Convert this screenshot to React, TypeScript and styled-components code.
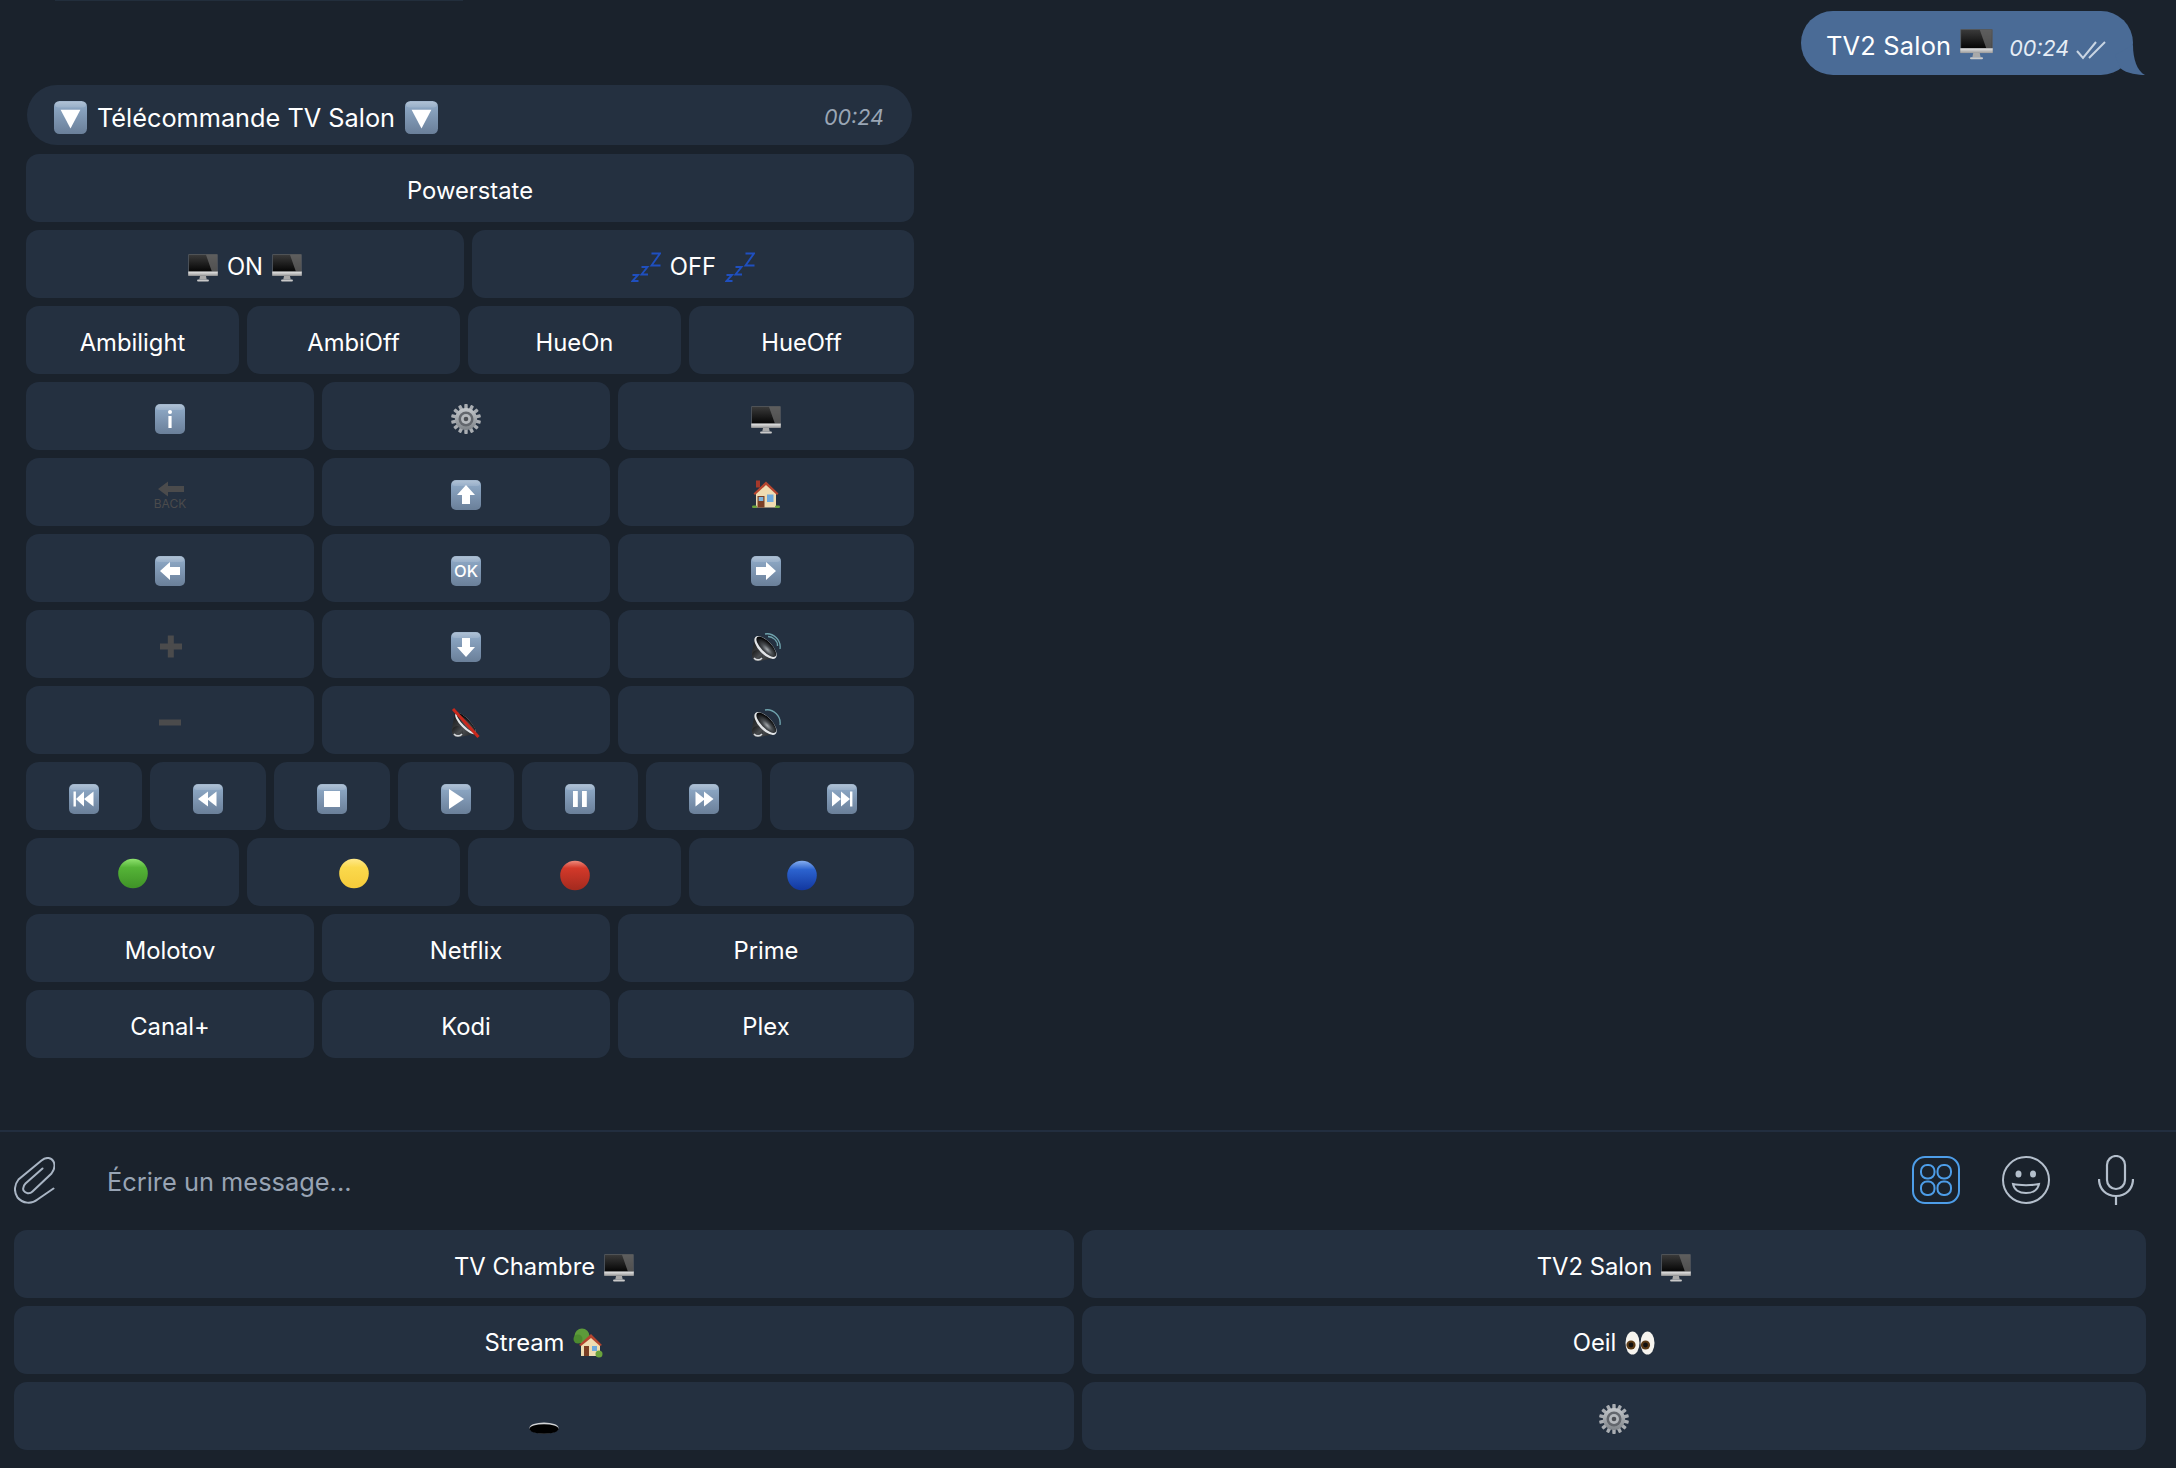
import React from 'react';
import styled, {createGlobalStyle} from 'styled-components';

const GlobalStyle = createGlobalStyle`
  html, body {
    margin: 0;
    padding: 0;
    background: #1a222c;
  }
  body {
    font-family: Inter, "Noto Sans", "Liberation Sans", sans-serif;
    -webkit-font-smoothing: antialiased;
  }
`;

const Page = styled.div`
  width: 2176px;
  height: 1468px;
  background: #1a222c;
  display: flex;
  flex-direction: column;
  overflow: hidden;
`;

const HiddenDefs = styled.svg`
  position: absolute;
  width: 0;
  height: 0;
`;

const TopSliver = styled.div`
  width: 408px;
  height: 1px;
  margin-left: 55px;
  background: #222e3c;
`;

const Messages = styled.main`
  flex: 1;
  display: flex;
  flex-direction: column;
  padding: 10px 43px 0 26px;
`;

const OutRow = styled.div`
  display: flex;
  justify-content: flex-end;
  margin-bottom: 10px;
`;

const OutBubble = styled.div`
  position: relative;
  height: 64px;
  box-sizing: border-box;
  width: 332px;
  padding: 0 16px 0 25px;
  border-radius: 32px;
  background: #4a6b96;
  color: #fff;
  display: flex;
  align-items: center;
  gap: 9px;
  font-size: 25.4px;
  letter-spacing: 0.2px;
  white-space: nowrap;
`;

const OutText = styled.span`
  margin-top: 5px;
`;

const BubbleTail = styled.svg`
  position: absolute;
  right: -12px;
  bottom: 0;
`;

const OutTime = styled.span`
  font-size: 21.5px;
  font-style: italic;
  letter-spacing: 0;
  color: #e6edf5;
  margin: 9px -2px 0 7px;
`;

const TickMarks = styled.svg`
  margin-top: 14px;
`;

const Remote = styled.section`
  width: 888px;
  display: flex;
  flex-direction: column;
  gap: 8px;
`;

const TitleBubble = styled.div`
  height: 60px;
  margin: 0 2px 1px 1px;
  box-sizing: border-box;
  padding: 4px 28px 0 27px;
  border-radius: 30px;
  background: #243040;
  color: #fff;
  display: flex;
  align-items: center;
  gap: 10px;
  font-size: 25.3px;
`;

const InTime = styled.span`
  margin-left: auto;
  font-size: 21.5px;
  font-style: italic;
  color: #9aa6b5;
`;

const KeyRow = styled.div<{$cols: string}>`
  display: grid;
  grid-template-columns: ${p => p.$cols};
  gap: 8px;
`;

const Tile = styled.button`
  height: 68px;
  box-sizing: border-box;
  border: 0;
  padding: 5px 0 0;
  border-radius: 13px;
  background: #243040;
  color: #fff;
  font-family: inherit;
  font-size: 23.8px;
  display: flex;
  align-items: center;
  justify-content: center;
  gap: 9px;
`;

const Composer = styled.div`
  height: 100px;
  box-sizing: border-box;
  border-top: 2px solid #222e3f;
  padding: 0 42px 2px 14px;
  display: flex;
  align-items: center;
`;

const Placeholder = styled.span`
  margin: 3px 0 0 52px;
  flex: 1;
  font-size: 25.4px;
  color: #98a4b4;
`;

const ComposerIcons = styled.div`
  display: flex;
  align-items: center;
  gap: 42px;
`;

const MicSlot = styled.div`
  display: flex;
  margin-left: 6px;
`;

const Keyboard = styled.div`
  display: grid;
  grid-template-columns: 1060px 1064px;
  gap: 8px;
  padding: 0 30px 18px 14px;
`;

const MonitorSvg = styled.svg`
  flex-shrink: 0;
  margin-top: 3px;
`;

const Grads = () => (
  <HiddenDefs aria-hidden="true">
    <defs>
      <linearGradient id="cap" x1="0" y1="0" x2="0" y2="1">
        <stop offset="0" stopColor="#a6bad0"/>
        <stop offset="0.18" stopColor="#8ba5c2"/>
        <stop offset="1" stopColor="#6a7f99"/>
      </linearGradient>
      <linearGradient id="screen" x1="0" y1="0" x2="0" y2="1">
        <stop offset="0" stopColor="#3a3a3a"/>
        <stop offset="1" stopColor="#050505"/>
      </linearGradient>
      <linearGradient id="chin" x1="0" y1="0" x2="0" y2="1">
        <stop offset="0" stopColor="#e8e8e8"/>
        <stop offset="1" stopColor="#9a9a9a"/>
      </linearGradient>
      <linearGradient id="green" x1="0" y1="0" x2="0" y2="1">
        <stop offset="0" stopColor="#8fe36f"/>
        <stop offset="0.3" stopColor="#55b437"/>
        <stop offset="1" stopColor="#3f9227"/>
      </linearGradient>
      <linearGradient id="yellow" x1="0" y1="0" x2="0" y2="1">
        <stop offset="0" stopColor="#ffe98a"/>
        <stop offset="0.3" stopColor="#fbd94c"/>
        <stop offset="1" stopColor="#f6cb3a"/>
      </linearGradient>
      <linearGradient id="red" x1="0" y1="0" x2="0" y2="1">
        <stop offset="0" stopColor="#ee8a7c"/>
        <stop offset="0.25" stopColor="#d3392a"/>
        <stop offset="1" stopColor="#a32a1e"/>
      </linearGradient>
      <linearGradient id="blue" x1="0" y1="0" x2="0" y2="1">
        <stop offset="0" stopColor="#86aff0"/>
        <stop offset="0.3" stopColor="#2c63cf"/>
        <stop offset="1" stopColor="#12379f"/>
      </linearGradient>
      <linearGradient id="steel" x1="0" y1="0" x2="0" y2="1">
        <stop offset="0" stopColor="#c4c8cc"/>
        <stop offset="1" stopColor="#7f8489"/>
      </linearGradient>
      <radialGradient id="cone" cx="0.6" cy="0.62" r="0.6">
        <stop offset="0" stopColor="#a4a9ad"/>
        <stop offset="0.4" stopColor="#4a4e52"/>
        <stop offset="1" stopColor="#050506"/>
      </radialGradient>
      <linearGradient id="magnet" x1="0" y1="0" x2="1" y2="1">
        <stop offset="0" stopColor="#121314"/>
        <stop offset="0.6" stopColor="#4a4d50"/>
        <stop offset="1" stopColor="#1e2022"/>
      </linearGradient>
    </defs>
  </HiddenDefs>
);

const KeyCap = ({size = 30, children}: {size?: number; children: React.ReactNode}) => (
  <svg width={size} height={size} viewBox="0 0 30 30">
    <rect width="30" height="30" rx="5" fill="url(#cap)"/>
    <rect x="1" y="1" width="28" height="5" rx="3" fill="#fff" opacity="0.14"/>
    <g fill="#fff">{children}</g>
  </svg>
);

const Monitor = ({size = 30}: {size?: number}) => (
  <MonitorSvg width={size} height={size * 0.92} viewBox="0 0 30 28">
    <rect x="0" y="0" width="30" height="22" rx="1" fill="#55595e"/>
    <rect x="0.8" y="0.8" width="28.4" height="17" fill="url(#screen)"/>
    <path d="M18 0.8H29.2V17.8H24Z" fill="#6a6a6a" opacity="0.75"/>
    <rect x="0" y="17.8" width="30" height="4.4" fill="url(#chin)"/>
    <path d="M12 22.2H18L18.8 26H11.2Z" fill="#a9a9a9"/>
    <rect x="9" y="26" width="12" height="2" rx="1" fill="#c9c9c9"/>
  </MonitorSvg>
);

const Gear = ({size = 30}: {size?: number}) => (
  <svg width={size} height={size} viewBox="0 0 30 30">
    {Array.from({length: 14}).map((_, i) => (
      <rect key={i} x="13.3" y="0" width="3.4" height="7" rx="0.8" fill="#a9adb2"
            transform={`rotate(${i * (360 / 14)} 15 15)`}/>
    ))}
    <circle cx="15" cy="15" r="11" fill="url(#steel)"/>
    <circle cx="15" cy="15" r="7.5" fill="#63676d"/>
    <circle cx="15" cy="15" r="5" fill="#b4b8bc"/>
    <circle cx="15" cy="15" r="2.3" fill="#4c4f54"/>
  </svg>
);

const House = () => (
  <svg width="30" height="30" viewBox="0 0 30 30">
    <rect x="5" y="0.5" width="4" height="7" fill="#a5382a"/>
    <path d="M5 12L15 3L25 12V27.5H5Z" fill="#f0dcb2"/>
    <path d="M2.5 13.5L15 1.5L27.5 13.5L26 15L15 5L4 15Z" fill="#b5452f"/>
    <rect x="6.5" y="16" width="7" height="11.5" fill="#7b3f25"/>
    <rect x="7.7" y="17" width="4.6" height="4" fill="#7db4dc"/>
    <rect x="16" y="14.5" width="6.5" height="7.5" fill="#6ea9dd"/>
    <rect x="1" y="25.5" width="5" height="2.6" rx="1.3" fill="#6aa33c"/>
    <rect x="24" y="25.5" width="5" height="2.6" rx="1.3" fill="#6aa33c"/>
  </svg>
);

const TreeHouse = () => (
  <svg width="30" height="30" viewBox="0 0 30 30">
    <circle cx="9" cy="8" r="7.5" fill="#5d9b3a"/>
    <circle cx="5" cy="11" r="4.5" fill="#4c8a2f"/>
    <path d="M8 16L18 8L27 16V28H8Z" fill="#f0dcb2"/>
    <path d="M6 17L18 6L29 17L27 18L18 10L8 18Z" fill="#b5452f"/>
    <rect x="11" y="18" width="5" height="10" fill="#7b3f25"/>
    <rect x="19" y="18" width="5" height="5" fill="#6ea9dd"/>
    <circle cx="26" cy="26" r="3.5" fill="#6aa33c"/>
  </svg>
);

const Speaker = ({waves = 2, muted = false}: {waves?: number; muted?: boolean}) => (
  <svg width="30" height="30" viewBox="0 0 30 30">
    {waves > 0 && <path d="M14 2C22 0.5 30.5 8 29 17" fill="none" stroke="#6fa3ad" strokeWidth="1.3"/>}
    {waves > 1 && <path d="M17 4.5C22 4.5 27 9 26.5 14" fill="none" stroke="#6fa3ad" strokeWidth="1.3"/>}
    <path d="M4 5L24 26L9 29C3 29 0 25 1 20Z" fill="url(#magnet)"/>
    <circle cx="6.5" cy="23.5" r="5.5" fill="url(#magnet)"/>
    <path d="M3 26C5 28.5 9 28.5 11 26" fill="none" stroke="#d4d8dc" strokeWidth="1.6"/>
    <g transform="rotate(46 14.5 15.5)">
      <ellipse cx="14.5" cy="15.5" rx={muted ? 14 : 14.5} ry={muted ? 4.8 : 6.6} fill="#e2e5e8"/>
      <ellipse cx="14.5" cy="14.4" rx={muted ? 13 : 13.2} ry={muted ? 3.6 : 5.2} fill="url(#cone)"/>
    </g>
    {muted && <path d="M2 1L27.5 29" stroke="#c9281c" strokeWidth="3"/>}
  </svg>
);

const Zzz = () => (
  <svg width="30" height="30" viewBox="0 0 30 30" fill="none" stroke="#1f4fbf" strokeWidth="1.9">
    <path d="M20.5 1.5H29L20.5 13.5H29.5"/>
    <path d="M10.5 15H16.5L10.5 22.5H17"/>
    <path d="M1.5 23H7L1.5 29H7.5"/>
  </svg>
);

const Ball = ({color, cy = 15}: {color: string; cy?: number}) => (
  <svg width="30" height="30" viewBox="0 0 30 30" overflow="visible">
    <circle cx="15" cy={cy} r="14.8" fill={`url(#${color})`}/>
  </svg>
);

const Eyes = () => (
  <svg width="30" height="30" viewBox="0 0 30 30">
    <ellipse cx="7.5" cy="15" rx="7" ry="11.5" fill="#f6f4ef"/>
    <ellipse cx="22.5" cy="15" rx="7" ry="11.5" fill="#f6f4ef"/>
    <circle cx="6" cy="17" r="4.6" fill="#5a3a16"/>
    <circle cx="6" cy="17" r="2.4" fill="#111"/>
    <circle cx="20.5" cy="17" r="4.6" fill="#5a3a16"/>
    <circle cx="20.5" cy="17" r="2.4" fill="#111"/>
  </svg>
);

const Hole = () => (
  <svg width="30" height="30" viewBox="0 0 30 30">
    <ellipse cx="15" cy="24" rx="14.5" ry="5.6" fill="#d2d4d6"/>
    <ellipse cx="15" cy="25" rx="14.5" ry="4.8" fill="#000"/>
  </svg>
);

const Back = () => (
  <svg width="30" height="34" viewBox="0 -1 30 34" overflow="visible">
    <path d="M3 10L13 2.5V7H29V13H13V17.5Z" fill="#4b4b4c"/>
    <text x="15" y="28.5" textAnchor="middle" fontSize="12" fontFamily="Inter, sans-serif" fill="#4b4b4c">BACK</text>
  </svg>
);

const Plus = () => (
  <svg width="30" height="30" viewBox="0 0 30 30" fill="#4b4b4c">
    <rect x="12.8" y="3.5" width="6" height="22"/>
    <rect x="5" y="11.5" width="22" height="6"/>
  </svg>
);

const Minus = () => (
  <svg width="30" height="30" viewBox="0 0 30 30" fill="#4b4b4c">
    <rect x="4" y="11.5" width="22" height="6"/>
  </svg>
);

const glyphs: Record<string, React.ReactNode> = {
  down: <polygon points="15,25 24,15 19,15 19,6 11,6 11,15 6,15"/>,
  up: <polygon points="15,5 24,15 19,15 19,24 11,24 11,15 6,15"/>,
  left: <polygon points="5,15 15,6 15,11 25,11 25,19 15,19 15,24"/>,
  right: <polygon points="25,15 15,6 15,11 5,11 5,19 15,19 15,24"/>,
  tri: <polygon points="6,8 24,8 15,25"/>,
  info: <><circle cx="15" cy="8" r="2"/><rect x="13.4" y="12" width="3.2" height="12"/></>,
  ok: <text x="15" y="21" textAnchor="middle" fontSize="16.5" fontWeight="500" fontFamily="Inter, sans-serif">OK</text>,
  first: <><rect x="4.5" y="7.5" width="2.4" height="15"/><polygon points="7,15 15,7.5 15,22.5"/><polygon points="15,15 24.5,7.5 24.5,22.5"/></>,
  rew: <><polygon points="5,15 15,7.5 15,22.5"/><polygon points="14,15 23.5,7.5 23.5,22.5"/></>,
  stop: <rect x="7" y="7" width="16" height="16"/>,
  play: <polygon points="8,5 23,15 8,25"/>,
  pause: <><rect x="8" y="7" width="4.8" height="16"/><rect x="17" y="7" width="4.8" height="16"/></>,
  fwd: <><polygon points="6.5,7.5 16,15 6.5,22.5"/><polygon points="15,7.5 24.5,15 15,22.5"/></>,
  last: <><polygon points="5,7.5 14,15 5,22.5"/><polygon points="14,7.5 23,15 14,22.5"/><rect x="23" y="7.5" width="2.4" height="15"/></>,
};

const Cap = ({name, size}: {name: string; size?: number}) => <KeyCap size={size}>{glyphs[name]}</KeyCap>;

const PaperClip = () => (
  <svg width="41" height="47" viewBox="-0.5 -0.5 41 47" fill="none" stroke="#a9b5c4" strokeWidth="2" strokeLinecap="round">
    <path d="M39 31L23 42C17 47 8 46 3 40C-1 34 0 27 4 22L27 3C32 -1 37 0 39 4C41 8 40 12 37 16L18 34C15 37 11 36 9 33C8 30 9 28 11 26L28 11"/>
  </svg>
);

const StickerIcon = () => (
  <svg width="48" height="48" viewBox="0 0 48 48" fill="none" stroke="#4d9de8" strokeWidth="2">
    <rect x="1" y="1" width="46" height="46" rx="12"/>
    <rect x="9" y="9" width="13.5" height="13.5" rx="6"/>
    <rect x="25.5" y="9" width="13.5" height="13.5" rx="6"/>
    <rect x="9" y="25.5" width="13.5" height="13.5" rx="6"/>
    <rect x="25.5" y="25.5" width="13.5" height="13.5" rx="6"/>
  </svg>
);

const SmileIcon = () => (
  <svg width="48" height="48" viewBox="0 0 48 48" fill="none" stroke="#b4bfcc" strokeWidth="2">
    <circle cx="24" cy="24" r="23"/>
    <ellipse cx="16.5" cy="18" rx="3" ry="3.6" fill="#b4bfcc" stroke="none"/>
    <ellipse cx="31" cy="18" rx="3" ry="3.6" fill="#b4bfcc" stroke="none"/>
    <path d="M11 28C17 29.5 31 29.5 37 28C36 33.5 31 37 24 37C17 37 12 33.5 11 28Z"/>
  </svg>
);

const MicIcon = () => (
  <svg width="36" height="50" viewBox="0 0 36 50" fill="none" stroke="#b4bfcc" strokeWidth="2.2">
    <rect x="9" y="1" width="18" height="33" rx="9"/>
    <path d="M1 24C1 34 8 41 18 41C28 41 35 34 35 24"/>
    <path d="M18 41V50"/>
  </svg>
);

const Ticks = () => (
  <TickMarks width="30" height="20" viewBox="0 0 30 20" fill="none" stroke="#c9d5e3" strokeWidth="2">
    <path d="M1 11L7 18L20 2"/>
    <path d="M13 18L29 2"/>
  </TickMarks>
);

const App = () => (
  <Page>
    <GlobalStyle/>
    <Grads/>
    <TopSliver/>
    <Messages>
      <OutRow>
        <OutBubble>
          <OutText>TV2 Salon</OutText>
          <Monitor size={33}/>
          <OutTime>00:24</OutTime>
          <Ticks/>
          <BubbleTail width="30" height="30" viewBox="0 0 30 30">
            <path d="M18 0C18 14 22 26 30 30C24 30 12 29 5 23L0 10Z" fill="#4a6b96"/>
          </BubbleTail>
        </OutBubble>
      </OutRow>
      <Remote>
        <TitleBubble>
          <Cap name="tri" size={33}/>
          Télécommande TV Salon
          <Cap name="tri" size={33}/>
          <InTime>00:24</InTime>
        </TitleBubble>
        <KeyRow $cols="1fr"><Tile>Powerstate</Tile></KeyRow>
        <KeyRow $cols="438px 442px">
          <Tile><Monitor/>ON<Monitor/></Tile>
          <Tile><Zzz/>OFF<Zzz/></Tile>
        </KeyRow>
        <KeyRow $cols="213px 213px 213px 225px">
          <Tile>Ambilight</Tile>
          <Tile>AmbiOff</Tile>
          <Tile>HueOn</Tile>
          <Tile>HueOff</Tile>
        </KeyRow>
        <KeyRow $cols="288px 288px 296px">
          <Tile><Cap name="info"/></Tile>
          <Tile><Gear/></Tile>
          <Tile><Monitor/></Tile>
        </KeyRow>
        <KeyRow $cols="288px 288px 296px">
          <Tile><Back/></Tile>
          <Tile><Cap name="up"/></Tile>
          <Tile><House/></Tile>
        </KeyRow>
        <KeyRow $cols="288px 288px 296px">
          <Tile><Cap name="left"/></Tile>
          <Tile><Cap name="ok"/></Tile>
          <Tile><Cap name="right"/></Tile>
        </KeyRow>
        <KeyRow $cols="288px 288px 296px">
          <Tile><Plus/></Tile>
          <Tile><Cap name="down"/></Tile>
          <Tile><Speaker/></Tile>
        </KeyRow>
        <KeyRow $cols="288px 288px 296px">
          <Tile><Minus/></Tile>
          <Tile><Speaker waves={0} muted/></Tile>
          <Tile><Speaker waves={1}/></Tile>
        </KeyRow>
        <KeyRow $cols="repeat(6, 116px) 144px">
          <Tile><Cap name="first"/></Tile>
          <Tile><Cap name="rew"/></Tile>
          <Tile><Cap name="stop"/></Tile>
          <Tile><Cap name="play"/></Tile>
          <Tile><Cap name="pause"/></Tile>
          <Tile><Cap name="fwd"/></Tile>
          <Tile><Cap name="last"/></Tile>
        </KeyRow>
        <KeyRow $cols="213px 213px 213px 225px">
          <Tile><Ball color="green" cy={13.5}/></Tile>
          <Tile><Ball color="yellow" cy={13.5}/></Tile>
          <Tile><Ball color="red" cy={15.5}/></Tile>
          <Tile><Ball color="blue" cy={15.5}/></Tile>
        </KeyRow>
        <KeyRow $cols="288px 288px 296px">
          <Tile>Molotov</Tile>
          <Tile>Netflix</Tile>
          <Tile>Prime</Tile>
        </KeyRow>
        <KeyRow $cols="288px 288px 296px">
          <Tile>Canal+</Tile>
          <Tile>Kodi</Tile>
          <Tile>Plex</Tile>
        </KeyRow>
      </Remote>
    </Messages>
    <Composer>
      <PaperClip/>
      <Placeholder>Écrire un message...</Placeholder>
      <ComposerIcons>
        <StickerIcon/>
        <SmileIcon/>
        <MicSlot><MicIcon/></MicSlot>
      </ComposerIcons>
    </Composer>
    <Keyboard>
      <Tile>TV Chambre<Monitor/></Tile>
      <Tile>TV2 Salon<Monitor/></Tile>
      <Tile>Stream<TreeHouse/></Tile>
      <Tile>Oeil<Eyes/></Tile>
      <Tile><Hole/></Tile>
      <Tile><Gear/></Tile>
    </Keyboard>
  </Page>
);

export default App;
